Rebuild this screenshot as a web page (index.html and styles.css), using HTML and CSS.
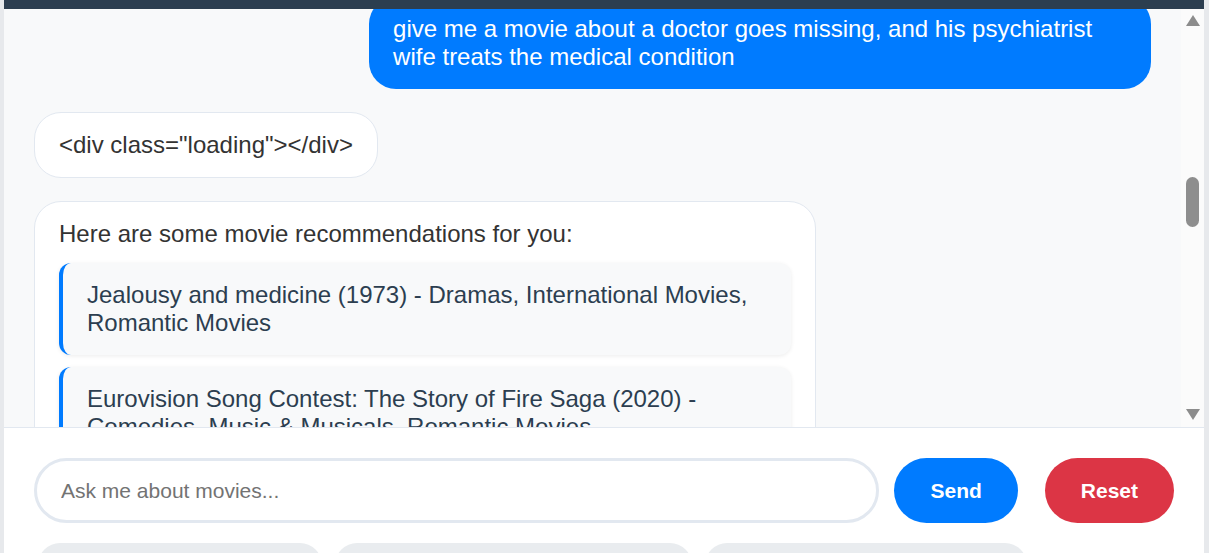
FILE: index.html
```html
<!DOCTYPE html>
<html lang="en">
<head>
<meta charset="utf-8">
<title>Movie Chat</title>
<link rel="stylesheet" href="styles.css">
</head>
<body>
<div class="app">
  <header class="app-header"></header>
  <div class="chat-row">
    <div class="chat-pane">
      <div class="messages">
        <div class="msg msg-user">give me a movie about a doctor goes missing, and his psychiatrist wife treats the medical condition</div>
        <div class="msg msg-bot">&lt;div class="loading"&gt;&lt;/div&gt;</div>
        <div class="msg msg-bot">
          <p class="rec-intro">Here are some movie recommendations for you:</p>
          <div class="movie-item">Jealousy and medicine (1973) - Dramas, International Movies, Romantic Movies</div>
          <div class="movie-item">Eurovision Song Contest: The Story of Fire Saga (2020) - Comedies, Music &amp; Musicals, Romantic Movies</div>
        </div>
      </div>
    </div>
    <div class="scrollbar" aria-hidden="true">
      <span class="arrow arrow-up"></span>
      <span class="thumb"></span>
      <span class="arrow arrow-down"></span>
    </div>
  </div>
  <div class="input-area">
    <div class="input-row">
      <input class="chat-input" type="text" placeholder="Ask me about movies...">
      <button class="btn btn-send">Send</button>
      <button class="btn btn-reset">Reset</button>
    </div>
    <div class="chips">
      <button class="chip chip-a" aria-label="Suggestion 1"></button>
      <button class="chip chip-b" aria-label="Suggestion 2"></button>
      <button class="chip chip-c" aria-label="Suggestion 3"></button>
    </div>
  </div>
</div>
</body>
</html>
```

FILE: styles.css
```css
* {
  box-sizing: border-box;
}

html, body {
  margin: 0;
  height: 100%;
  overflow: hidden;
}

body {
  background: #e7e9ec;
  padding: 0 5px 0 4px;
  font-family: "Liberation Sans", Arial, sans-serif;
}

.app {
  width: 1200px;
  height: 100%;
  display: flex;
  flex-direction: column;
  background: #ffffff;
}

.app-header {
  height: 9px;
  flex: none;
  background: #2c3e50;
}

.chat-row {
  height: 419px;
  flex: none;
  display: flex;
  border-bottom: 1px solid #e2e8f0;
  background: #f8f9fa;
}

.chat-pane {
  flex: 1;
  overflow: hidden;
  padding: 0 30px;
}

.messages {
  display: flex;
  flex-direction: column;
  gap: 23px;
  margin-top: -12px;
}

.msg {
  max-width: 70%;
  font-size: 24px;
  line-height: normal;
  padding: 18px 24px;
  border-radius: 27px;
}

.msg-user {
  align-self: flex-end;
  background: #007bff;
  color: #ffffff;
}

.msg-bot {
  align-self: flex-start;
  background: #ffffff;
  color: #333333;
  border: 1px solid #e2e8f0;
}

.rec-intro {
  margin: 0 0 15px;
}

.movie-item {
  background: #f8f9fa;
  color: #2c3e50;
  border-left: 4.5px solid #007bff;
  border-radius: 12px;
  padding: 18px 24px;
  margin-bottom: 12px;
  box-shadow: 0 1px 4px rgba(0, 0, 0, 0.08);
}

.scrollbar {
  width: 23px;
  flex: none;
  background: #fbfbfb;
  display: flex;
  flex-direction: column;
  align-items: center;
}

.arrow {
  width: 0;
  height: 0;
  border-left: 7.5px solid transparent;
  border-right: 7.5px solid transparent;
}

.arrow-up {
  margin-top: 6px;
  border-bottom: 11px solid #8c8c8c;
}

.arrow-down {
  margin-top: auto;
  margin-bottom: 7px;
  border-top: 11px solid #8c8c8c;
}

.thumb {
  width: 13px;
  height: 50px;
  margin-top: 151px;
  border-radius: 7px;
  background: #8e8e8e;
}

.input-area {
  flex: 1;
  background: #ffffff;
  padding: 30px 30px 0;
}

.input-row {
  display: flex;
  gap: 15px;
  align-items: center;
}

.chat-input {
  flex: 1;
  height: 65px;
  border: 3px solid #e2e8f0;
  border-radius: 33px;
  padding: 0 24px;
  font-family: inherit;
  font-size: 21px;
  color: #333333;
  background: #ffffff;
  outline: none;
}

.chat-input::placeholder {
  color: #737373;
}

.btn {
  height: 65px;
  padding: 0 36px;
  border: none;
  border-radius: 33px;
  color: #ffffff;
  font-family: inherit;
  font-size: 21px;
  font-weight: bold;
}

.btn-send {
  background: #007bff;
}

.btn-reset {
  background: #dc3545;
  margin-left: 12px;
}

.chips {
  display: flex;
  gap: 13px;
  margin-top: 20px;
  padding-left: 4px;
}

.chip {
  height: 44px;
  border: none;
  border-radius: 22px;
  background: #e9ecef;
}

.chip-a { width: 284px; }
.chip-b { width: 357px; }
.chip-c { width: 322px; }
```
